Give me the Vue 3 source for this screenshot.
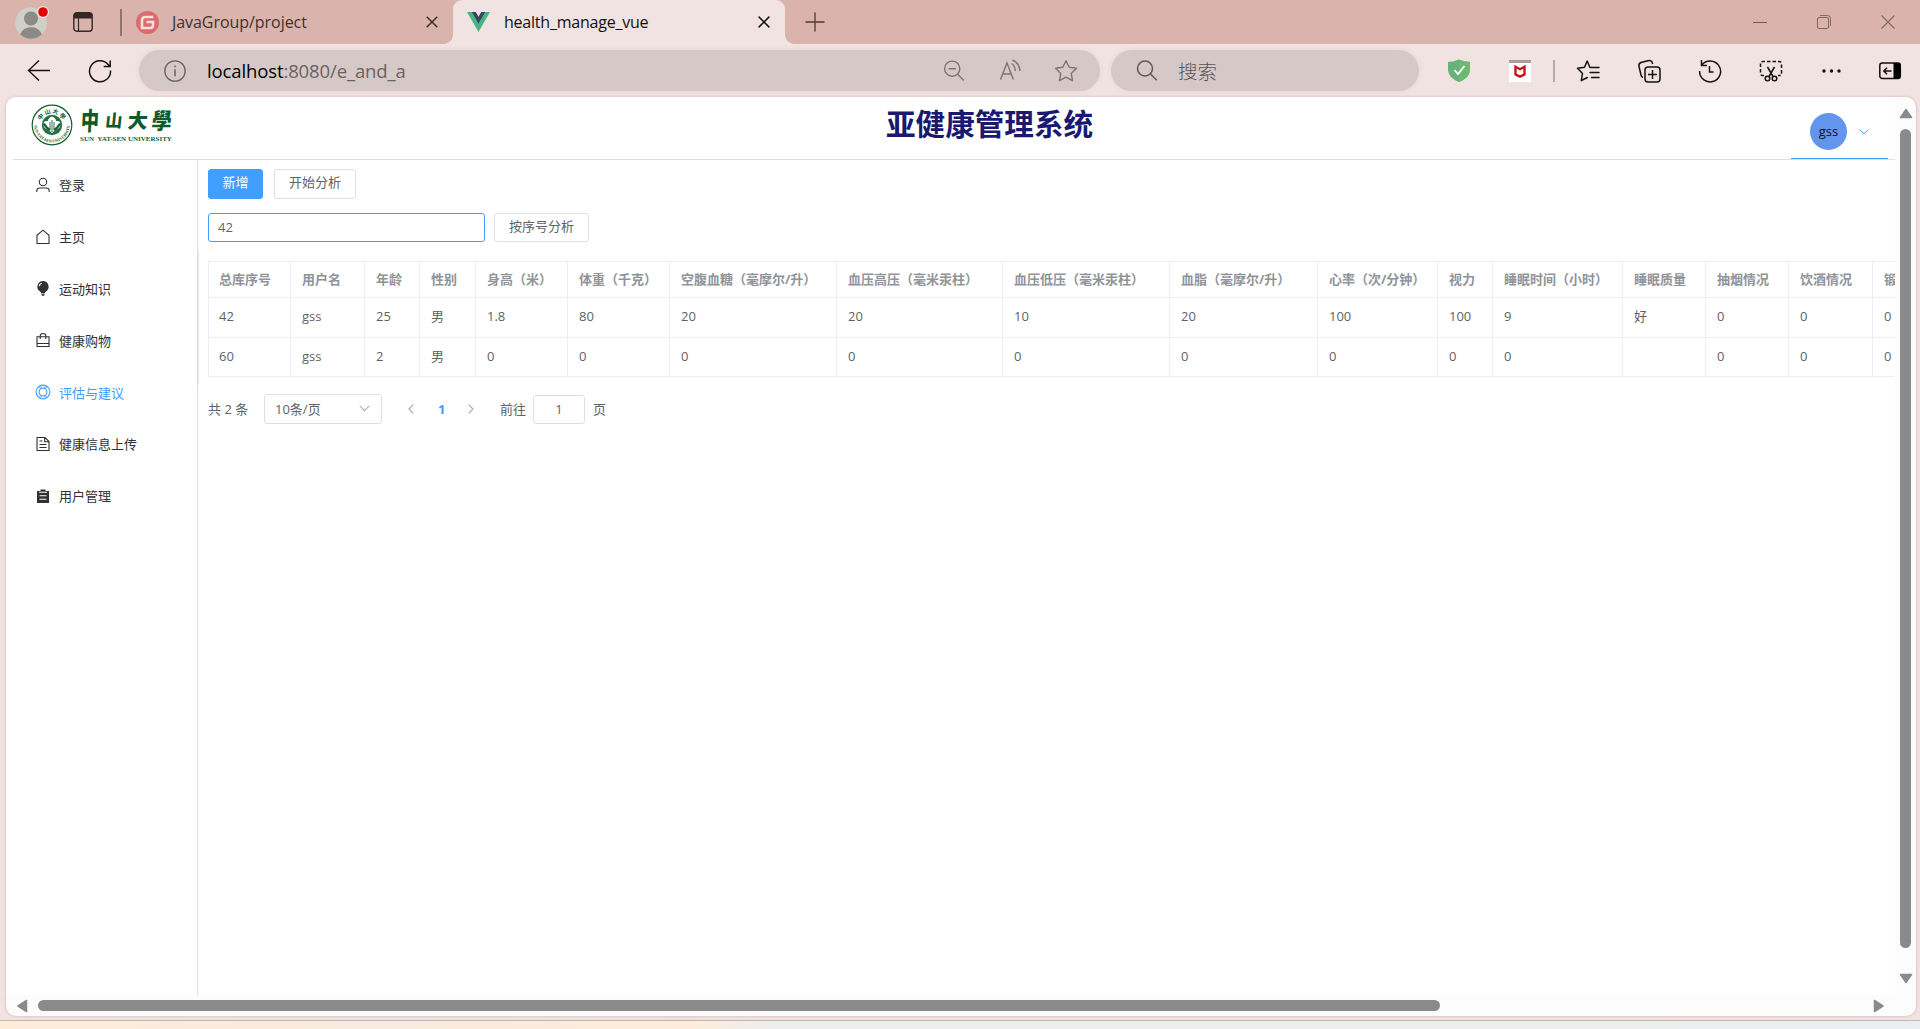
<script setup>
const menu = [
  { label: '登录', icon: 'user' },
  { label: '主页', icon: 'home' },
  { label: '运动知识', icon: 'bulb' },
  { label: '健康购物', icon: 'bag' },
  { label: '评估与建议', icon: 'help', active: true },
  { label: '健康信息上传', icon: 'doc' },
  { label: '用户管理', icon: 'clip' },
]

const columns = [
  { title: '总库序号', width: 82 },
  { title: '用户名', width: 74 },
  { title: '年龄', width: 55 },
  { title: '性别', width: 56 },
  { title: '身高（米）', width: 92 },
  { title: '体重（千克）', width: 102 },
  { title: '空腹血糖（毫摩尔/升）', width: 167 },
  { title: '血压高压（毫米汞柱）', width: 166 },
  { title: '血压低压（毫米汞柱）', width: 167 },
  { title: '血脂（毫摩尔/升）', width: 148 },
  { title: '心率（次/分钟）', width: 120 },
  { title: '视力', width: 55 },
  { title: '睡眠时间（小时）', width: 130 },
  { title: '睡眠质量', width: 83 },
  { title: '抽烟情况', width: 83 },
  { title: '饮酒情况', width: 84 },
  { title: '锻炼情况', width: 83 },
]

const rows = [
  ['42', 'gss', '25', '男', '1.8', '80', '20', '20', '10', '20', '100', '100', '9', '好', '0', '0', '0'],
  ['60', 'gss', '2', '男', '0', '0', '0', '0', '0', '0', '0', '0', '0', '', '0', '0', '0'],
]
</script>

<template>
  <div class="browser">
    <div class="tabbar">
      <svg class="profile" width="36" height="36" viewBox="0 0 36 36">
        <circle cx="16" cy="19" r="15.8" fill="#d0cfca" />
        <circle cx="16" cy="14.5" r="7" fill="#8d8a86" />
        <path d="M5.200 30.500C7 25.500 11 23.300 16 23.300s9 2.200 10.800 7.200A15.800 15.800 0 0 1 5.200 30.500z" fill="#8d8a86" />
        <circle cx="28" cy="8" r="6" fill="#f3ece9" />
        <circle cx="28" cy="8" r="4.800" fill="#e60000" />
      </svg>
      <svg class="tabmenu" width="20" height="20" viewBox="0 0 20 20">
        <rect x=".8" y=".8" width="18.400" height="18.400" rx="3" fill="none" stroke="#332825" stroke-width="1.400" />
        <path d="M.8 6.500V3.800a3 3 0 0 1 3-3h12.400a3 3 0 0 1 3 3v2.700z" fill="#332825" />
        <path d="M5.500 6v13" stroke="#332825" stroke-width="1.200" />
      </svg>
      <i class="sep"></i>
      <div class="tab tab-idle">
        <svg width="23" height="23" viewBox="0 0 23 23">
          <circle cx="11.500" cy="11.500" r="11.500" fill="#dc6b6e" />
          <path d="M17.300 6H9.200Q6 6 6 9.200V17h8.300q2.700 0 2.700-2.700V11h-6.500" fill="none" stroke="#f5dedc" stroke-width="2.600" />
        </svg>
        <span class="name idle-name">JavaGroup/project</span>
        <svg class="x" width="12" height="12" viewBox="0 0 12 12"><path d="M.7.7l10.600 10.600M11.300.7L.7 11.300" stroke="#332b29" stroke-width="1.400" /></svg>
      </div>
      <div class="tab tab-live">
        <svg width="23" height="20" viewBox="0 0 23 20">
          <path d="M0 0h4.600l6.900 12L18.400 0H23L11.500 20z" fill="#41b883" />
          <path d="M4.600 0h4.200l2.700 4.700L14.200 0h4.200l-6.900 12z" fill="#35495e" />
        </svg>
        <span class="name live-name">health_manage_vue</span>
        <svg class="x" width="12" height="12" viewBox="0 0 12 12"><path d="M.6.6l10.800 10.800M11.400.6L.6 11.400" stroke="#111" stroke-width="1.500" /></svg>
      </div>
      <svg class="plus" width="20" height="20" viewBox="0 0 20 20"><path d="M10 .5v19M.5 10h19" stroke="#4b3a37" stroke-width="1.300" /></svg>
      <div class="winbtns">
        <svg width="16" height="16" viewBox="0 0 16 16"><path d="M1 8.500h14" stroke="#6f5b58" /></svg>
        <svg width="16" height="16" viewBox="0 0 16 16" fill="none" stroke="#7d6865"><rect x="1.500" y="3.500" width="11" height="11" rx="1.500" /><path d="M4 1.500h7.500a3 3 0 0 1 3 3V12" /></svg>
        <svg width="16" height="16" viewBox="0 0 16 16"><path d="M1.500 1.500l13 13M14.500 1.500l-13 13" stroke="#7d6865" stroke-width="1.100" /></svg>
      </div>
    </div>

    <div class="toolbar">
      <svg class="back" width="24" height="24" viewBox="0 0 24 24" fill="none" stroke="#111" stroke-width="1.400"><path d="M23 11.500H1.500M12 1.500L1.500 11.500 12 21.500" /></svg>
      <svg class="reload" width="24" height="24" viewBox="0 0 24 24" fill="none" stroke="#111" stroke-width="1.500"><path d="M22.500 11.500A10.500 10.500 0 1 1 19.800 5.200L21.800 7.200M22.200 1.500v5.900h-6.500" /></svg>
      <div class="pill address">
        <svg width="22" height="22" viewBox="0 0 22 22" fill="none" stroke="#6a6361" stroke-width="1.300"><circle cx="11" cy="11" r="10.200" /><path d="M11 9.200v7M11 5.500v1.700" stroke-width="1.500" /></svg>
        <span class="url"><b>localhost</b>:8080/e_and_a</span>
        <div class="pill-icons">
          <svg width="24" height="24" viewBox="0 0 24 24" fill="none" stroke="#7c7574" stroke-width="1.400"><circle cx="10.200" cy="9.700" r="7.600" /><path d="M6.500 9.700h7.400M15.800 15.400l6 6" /></svg>
          <svg width="24" height="24" viewBox="0 0 24 24" fill="none" stroke="#7c7574" stroke-width="1.400"><path d="M2.500 20.500L9 4l6.300 16.500M4.800 15h8.300M13.500 4.500q3.500 2 3.800 7.500M14.500 1q7 3 7.500 11" /></svg>
          <svg width="24" height="24" viewBox="0 0 24 24" fill="none" stroke="#7c7574" stroke-width="1.400" stroke-linejoin="round"><path d="M12 1.700l3.200 6.600 7.300 1-5.300 5.100 1.300 7.300L12 18.200l-6.500 3.500 1.300-7.300L1.500 9.300l7.300-1z" /></svg>
        </div>
      </div>
      <div class="pill search">
        <svg width="24" height="24" viewBox="0 0 24 24" fill="none" stroke="#5e5857" stroke-width="1.500"><circle cx="10" cy="9.500" r="7.500" /><path d="M15.500 15l6.300 6.300" /></svg>
        <span>搜索</span>
      </div>
      <div class="actions">
        <svg width="24" height="24" viewBox="0 0 24 24"><path d="M1 3Q7 2.500 12 .5q5 2 11 2.500v7.500q0 8-11 12.500Q1 18.500 1 10.500z" fill="#67b279" /><path d="M12 .5q5 2 11 2.500v7.500q0 8-11 12.500z" fill="#68bc71" /><path d="M7.500 11l3.500 4L17.500 7" fill="none" stroke="#fff" stroke-width="1.800" /></svg>
        <svg width="24" height="24" viewBox="0 0 24 24"><path d="M1 4h22v19H1z" fill="#fff" /><rect x="1" y="1" width="22" height="3" rx="1" fill="#a59d9c" /><path d="M7.500 7.800l4.500 2.400 4.500-2.400v7.700L12 17.700l-4.500-2.200z" fill="none" stroke="#c01818" stroke-width="2.400" /></svg>
        <i class="bar-sep"></i>
        <svg width="24" height="24" viewBox="0 0 24 24" fill="none" stroke="#151313" stroke-width="1.500" stroke-linejoin="round" stroke-linecap="round"><path d="M15 8.500l-1.200-.2L11.200 2 8.500 8.300 1.500 9.300l5 5.200L5.300 21.700l6-3.200M15.500 8.500h7.500M14 13.500h9M15.500 18.500h7.500" /></svg>
        <svg width="24" height="24" viewBox="0 0 24 24" fill="none" stroke="#151313" stroke-width="1.500"><rect x="8" y="8" width="15" height="15" rx="3" /><path d="M15.500 11v9M11 15.500h9M6 18.500q-1.500-.3-2-2.500L2 7.500q-.7-3 2-4L11 1.700q3-.8 4 1.300l.7 2" /></svg>
        <svg width="24" height="24" viewBox="0 0 24 24" fill="none" stroke="#151313" stroke-width="1.500"><path d="M3.800 6A10.500 10.500 0 1 1 1.600 12M3.500 1v5.500h5.500M11.500 7v6h4" /></svg>
        <svg width="24" height="24" viewBox="0 0 24 24" fill="none" stroke="#151313" stroke-width="1.500"><path d="M5 16.500H3.500Q1.500 16.500 1.500 14V5q0-2.500 2.500-2.500h16q2.500 0 2.500 2.500v9q0 2.500-2 2.500H19" stroke-dasharray="3.500 2" /><path d="M8.500 8l5.800 10M15.500 8l-5.800 10" /><circle cx="8.500" cy="19.500" r="2.300" /><circle cx="15.500" cy="19.500" r="2.300" /></svg>
        <svg width="24" height="24" viewBox="0 0 24 24" fill="#151313"><circle cx="4" cy="12" r="1.700" /><circle cx="11.500" cy="12" r="1.700" /><circle cx="19" cy="12" r="1.700" /></svg>
        <svg class="side-ic" width="24" height="24" viewBox="0 0 24 24"><rect x="1.800" y="4" width="20.500" height="15.500" rx="2.500" fill="none" stroke="#111" stroke-width="1.500" /><path d="M15.500 4h5q2 0 2 2v11.500q0 2-2 2h-5z" fill="#000" /><path d="M13.500 12H6M9 8.800L5.800 12 9 15.200" fill="none" stroke="#111" stroke-width="1.500" /></svg>
      </div>
    </div>

    <div class="page">
      <div class="view">
        <div class="site">
          <header class="head">
            <div class="logo">
              <svg width="42" height="42" viewBox="0 0 42 42">
                <defs>
                  <path id="arc-top" d="M9.300 21a11.700 11.700 0 0 1 23.400 0" />
                  <path id="arc-bottom" d="M3.700 15.500a18 18 0 1 0 34.600 0" />
                </defs>
                <circle cx="21" cy="21" r="19.800" fill="none" stroke="#125c2e" stroke-width="1.200" />
                <circle cx="21" cy="21" r="10.200" fill="#2b7045" />
                <path d="M21 12.500q4 1.500 4 4.500 4.500-.5 4.500 3 0 4.500-4.500 5.500l-4 3.500-4-3.500q-4.500-1-4.500-5.500 0-3.500 4.500-3 0-3 4-4.500z" fill="#fff" />
                <path d="M12.800 19.500q3 5 6.500 6.500M29.200 19.500q-3 5-6.500 6.500" fill="none" stroke="#1c6437" stroke-width="2.400" />
                <path d="M21 16v12M19 18v7M23 18v7" stroke="#1c6437" stroke-width=".9" />
                <text class="seal-cn"><textPath href="#arc-top" startOffset="50%" text-anchor="middle">中山大學</textPath></text>
                <text class="seal-en"><textPath href="#arc-bottom" startOffset="50%" text-anchor="middle">SUN YAT-SEN UNIVERSITY</textPath></text>
              </svg>
              <div class="word">
                <div class="word-cn"><span class="zhong">中</span><span class="shan">山</span><span class="da">大</span><span class="xue">學</span></div>
                <div class="word-en">SUN&nbsp; YAT-SEN UNIVERSITY</div>
              </div>
            </div>
            <h1>亚健康管理系统</h1>
            <div class="account">
              <span class="avatar">gss</span>
              <svg width="10" height="6" viewBox="0 0 10 6" fill="none" stroke="#409eff"><path d="M.7.700L5 4.800 9.300.700" /></svg>
            </div>
          </header>
          <div class="body">
            <nav class="side">
              <div v-for="m in menu" :key="m.label" class="item" :class="{ active: m.active }">
                <svg width="16" height="16" viewBox="0 0 16 16" fill="none" stroke="currentColor" stroke-width="1.100">
                  <template v-if="m.icon === 'user'"><circle cx="8" cy="5" r="3.700" /><path d="M1.800 15v-1.200q0-2.800 2.800-2.800h6.800q2.800 0 2.800 2.800V15" /></template>
                  <path v-else-if="m.icon === 'home'" d="M2 14.500V6.300L8 1.200l6 5.100v8.200z" />
                  <template v-else-if="m.icon === 'bulb'"><path d="M8 1a5.600 5.600 0 0 0-3.200 10.200L6.300 13h3.400l1.500-1.800A5.600 5.600 0 0 0 8 1z" fill="currentColor" stroke="none" /><path d="M6.200 14h3.600M6.700 15.300h2.600" /><path d="M4.300 6.200q.3-2.600 2.700-3" stroke="#fff" /></template>
                  <template v-else-if="m.icon === 'bag'"><path d="M2 4.800h12v9.700H2zM2 11.500h12M5.200 7V4q0-2.500 2.800-2.500T10.800 4v3" /></template>
                  <template v-else-if="m.icon === 'help'"><circle cx="8" cy="8" r="6.900" /><circle cx="8" cy="8" r="3.900" /><path d="M3.500 2.800l2.300 2M12.500 2.800l-2.300 2M3.500 13.200l2.300-2M12.500 13.200l-2.300-2M6 2v2M10 2v2M6 14v-2M10 14v-2" stroke-width=".8" /></template>
                  <template v-else-if="m.icon === 'doc'"><path d="M2 1.500h8l4 4v9H2zM9.700 1.500v4.300H14M4.500 5h3M4.500 8.500h7M4.500 11.500h7" /></template>
                  <template v-else><path d="M2 3h12v12H2z" fill="currentColor" stroke="none" /><path d="M5.500 1.500h5v2.200h-5z" fill="currentColor" stroke="none" /><path d="M4 4.300h8M4.500 7.800h7M4.500 11.300h7" stroke="#fff" /></template>
                </svg>
                <span>{{ m.label }}</span>
              </div>
            </nav>
            <main class="main">
              <div class="line first">
                <button class="btn primary">新增</button>
                <button class="btn wide4">开始分析</button>
              </div>
              <div class="line second">
                <div class="field">42</div>
                <button class="btn wide5">按序号分析</button>
              </div>
              <div class="table-wrap">
                <table>
                  <colgroup><col v-for="c in columns" :key="c.title" :style="{ width: c.width + 'px' }" /></colgroup>
                  <thead><tr><th v-for="c in columns" :key="c.title">{{ c.title }}</th></tr></thead>
                  <tbody><tr v-for="r in rows" :key="r[0]"><td v-for="(v, i) in r" :key="i">{{ v }}</td></tr></tbody>
                </table>
              </div>
              <div class="pager">
                <span class="total">共 2 条</span>
                <div class="select"><span>10条/页</span>
                  <svg width="11" height="7" viewBox="0 0 11 7" fill="none" stroke="#a8abb2" stroke-width="1.100"><path d="M.8.800l4.700 4.800L10.200.800" /></svg>
                </div>
                <svg class="prev" width="6" height="10" viewBox="0 0 6 10" fill="none" stroke="#a8abb2" stroke-width="1.200"><path d="M5.200.700L1 5l4.200 4.300" /></svg>
                <b>1</b>
                <svg class="next" width="6" height="10" viewBox="0 0 6 10" fill="none" stroke="#a8abb2" stroke-width="1.200"><path d="M.8.700L5 5 .8 9.300" /></svg>
                <span class="goto">前往</span>
                <div class="jump">1</div>
                <span class="unit">页</span>
              </div>
            </main>
          </div>
        </div>
        <div class="vscroll">
          <svg width="14" height="11" viewBox="0 0 14 11"><path d="M7 1.500l5.500 8h-11z" fill="#8a8a8a" stroke="#8a8a8a" stroke-width="1.500" stroke-linejoin="round" /></svg>
          <i></i>
          <svg class="down" width="14" height="11" viewBox="0 0 14 11"><path d="M7 9.500L1.500 1.500h11z" fill="#8a8a8a" stroke="#8a8a8a" stroke-width="1.500" stroke-linejoin="round" /></svg>
        </div>
      </div>
      <div class="hscroll">
        <svg width="11" height="14" viewBox="0 0 11 14"><path d="M1 7l8.500-5.500v11z" fill="#8a8a8a" stroke="#8a8a8a" stroke-width="1.500" stroke-linejoin="round" /></svg>
        <i></i>
        <svg class="right" width="11" height="14" viewBox="0 0 11 14"><path d="M10 7L1.500 1.500v11z" fill="#8a8a8a" stroke="#8a8a8a" stroke-width="1.500" stroke-linejoin="round" /></svg>
      </div>
    </div>
    <div class="desktop"></div>
  </div>
</template>

<style>
body { margin: 0; overflow: hidden; }
</style>

<style scoped>
* { box-sizing: border-box; }
svg { display: block; flex: none; }
.browser { width: 1920px; height: 1029px; display: flex; flex-direction: column; background: #f1e3e1; font-family: "Open Sans", "Noto Sans CJK SC", sans-serif; overflow: hidden; }
.tabbar { height: 44px; flex: none; display: flex; background: #d9b3ac; align-items: center; }
.profile { margin: 0 0 0 15px; }
.tabmenu { margin-left: 22px; }
.sep { width: 2px; height: 27px; margin-left: 27px; background: #8f736f; }
.tab { height: 44px; display: flex; align-items: center; }
.tab-idle { width: 331px; padding: 0 15px 0 14px; }
.tab-live { width: 332px; padding: 0 15px 0 14px; background: #f1e3e1; border-radius: 9px 9px 0 0; position: relative; }
.tab-live::before, .tab-live::after { content: ""; position: absolute; bottom: 0; width: 9px; height: 9px; }
.tab-live::before { left: -9px; background: radial-gradient(circle at 0 0, transparent 8.500px, #f1e3e1 9px); }
.tab-live::after { right: -9px; background: radial-gradient(circle at 100% 0, transparent 8.500px, #f1e3e1 9px); }
.name { font-size: 16px; line-height: 22px; white-space: nowrap; }
.idle-name { margin-left: 13px; color: #43302d; letter-spacing: -.05px; }
.live-name { margin-left: 14px; color: #111; letter-spacing: -.22px; }
.x { margin-left: auto; }
.plus { margin-left: 20px; }
.winbtns { margin-left: auto; display: flex; gap: 48px; padding-right: 24px; }
.toolbar { height: 53px; flex: none; display: flex; align-items: center; }
.back { margin-left: 27px; }
.reload { margin-left: 37px; }
.pill { height: 41px; border-radius: 21px; background: #d6c8c7; display: flex; align-items: center; box-shadow: 0 0 5px #e4d5d3; }
.address { width: 961px; margin-left: 27px; padding: 0 22px 0 25px; }
.url { margin-left: 21px; font-size: 18.500px; letter-spacing: -.12px; color: #6a6362; white-space: nowrap; }
.url b { font-weight: 400; color: #000; }
.pill-icons { display: flex; gap: 32px; margin-left: auto; }
.search { width: 308px; margin-left: 11px; padding-left: 24px; }
.search span { margin-left: 19px; font-size: 19.500px; font-weight: 300; color: #555; }
.actions { display: flex; align-items: center; gap: 37px; margin-left: 28px; }
.bar-sep { width: 2px; height: 22px; background: #b9a9a7; margin: 0 -16px 0 -16px; }
.side-ic { margin-left: -3px; }
.page { width: 1910px; height: 919px; margin-left: 6px; flex: none; background: #fcfcfc; border-radius: 10px; overflow: hidden; box-shadow: 0 0 3px #c9b0ad; }
.view { display: flex; height: 898px; }
.site { width: 1889px; background: #fff; overflow: hidden; display: flex; flex-direction: column; padding-left: 7px; }
.head { height: 63px; flex: none; border-bottom: 1px solid #dcdfe6; display: flex; }
.logo { width: 180px; height: 56px; display: flex; padding: 7px 0 0 18px; }
.seal-cn { font: 700 6px "Noto Sans CJK TC", sans-serif; fill: #125c2e; letter-spacing: 1px; }
.seal-en { font: 700 4.200px "Liberation Serif", serif; fill: #125c2e; }
.word { margin-left: 7px; }
.word-cn { display: flex; height: 31px; width: 92px; justify-content: space-between; font: 900 20px/31px "Noto Sans CJK TC", sans-serif; color: #0d5a2b; }
.word-cn span { transform: skewX(-6deg); }
.word-cn .zhong { transform: scale(.9, 1.250) skewX(-4deg); }
.word-cn .shan { transform: scale(.85, .85) skewX(-6deg); }
.word-cn .xue { transform: scale(1, 1.120) skewX(-6deg); }
.word-en { font: 700 7px/8px "Liberation Serif", serif; color: #17603a; white-space: nowrap; }
h1 { margin: 0 0 0 693px; font-size: 29.600px; line-height: 54px; font-weight: 700; color: #191970; white-space: nowrap; }
.account { width: 97px; height: 62px; margin: 0 7px 0 auto; border-bottom: 1px solid #409eff; display: flex; padding: 8px 0 0 19px; gap: 12px; align-items: center; }
.avatar { width: 37px; height: 37px; border-radius: 50%; background: #6495ed; color: #111; font-size: 13px; line-height: 36px; text-align: center; }
.body { display: flex; flex: 1; }
.side { width: 185px; border-right: 1px solid #dcdfe6; }
.item { height: 51.800px; display: flex; align-items: center; gap: 8px; padding: 0 0 2px 22px; font-size: 13px; color: #303133; }
.active { color: #409eff; }
.main { flex: 1; min-width: 0; padding-top: 9px; font-size: 13px; color: #606266; }
.line { display: flex; padding-left: 10px; }
.btn { border: 1px solid #dcdfe6; border-radius: 3px; background: #fff; color: #606266; font: 13px/24px "Open Sans", "Noto Sans CJK SC", sans-serif; padding: 0 0 5px; height: 30px; }
.primary { width: 55px; background: #409eff; border-color: #409eff; color: #fff; }
.wide4 { width: 82px; margin-left: 11px; }
.second { margin-top: 14px; }
.field { width: 277px; height: 29px; border: 1px solid #409eff; border-radius: 3px; padding-left: 9px; line-height: 26px; }
.wide5 { width: 95px; height: 29px; margin-left: 9px; }
.table-wrap { margin-top: 9px; height: 134px; padding: 10px 0 0 9px; border-left: 1px solid #e6e9f1; overflow: hidden; }
table { border-collapse: collapse; table-layout: fixed; width: 1747px; }
th, td { border: 1px solid #ebeef5; padding: 0 0 2px 11px; text-align: left; font-weight: 400; white-space: nowrap; line-height: 20px; }
th:first-child, td:first-child { padding-left: 10px; }
th { height: 36px; color: #909399; font-weight: 700; }
td { height: 39.500px; }
.pager { display: flex; align-items: center; height: 30px; margin: 9px 0 0 10px; }
.total { width: 56px; padding-bottom: 1px; }
.select { width: 118px; height: 30px; border: 1px solid #dcdfe6; border-radius: 3px; display: flex; align-items: center; justify-content: space-between; padding: 0 11px 1px 10px; }
.prev { margin-left: 26px; }
.pager b { margin: 0 23px 0 24px; width: 8px; color: #409eff; }
.next { margin-left: -1px; }
.goto { margin-left: 26px; width: 33px; padding-bottom: 1px; }
.jump { width: 52px; height: 29px; border: 1px solid #dcdfe6; border-radius: 3px; line-height: 26px; text-align: center; }
.unit { margin-left: 8px; padding-bottom: 1px; }
.vscroll { width: 21px; padding: 11px 0 0 4px; }
.vscroll i { display: block; width: 11px; height: 819px; border-radius: 6px; background: #8a8a8a; margin: 10px 0 0 1px; }
.down { margin-top: 25px; }
.hscroll { height: 21px; display: flex; align-items: center; padding: 0 32px 0 11px; }
.hscroll i { width: 1402px; height: 11px; border-radius: 6px; background: #8a8a8a; margin-left: 10px; }
.right { margin-left: auto; }
.desktop { height: 9px; margin-top: auto; flex: none; border-top: 1px solid #c0b8b0; background: linear-gradient(90deg, #feecd9, #f9ebe0 20%, #feecd9 36%, #eeeeee 40%, #eeeeee 85%, #e9eff4); }
</style>
